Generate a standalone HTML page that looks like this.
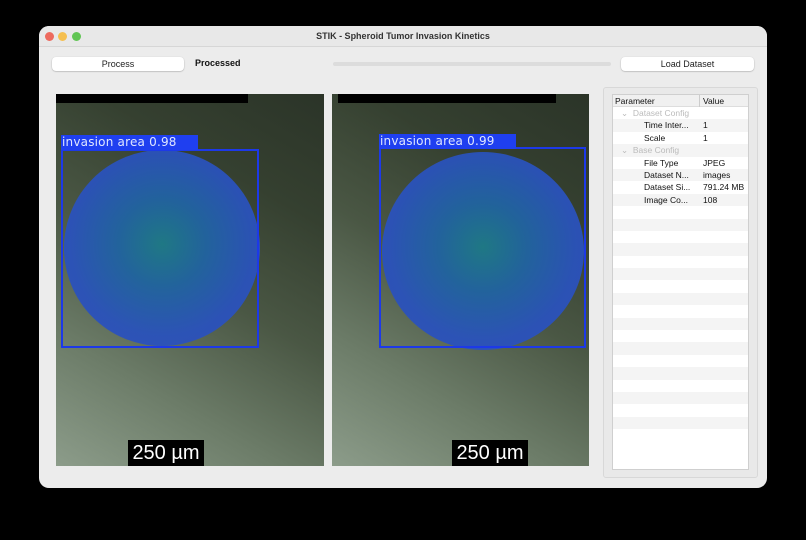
<!DOCTYPE html>
<html><head><meta charset="utf-8"><style>
*{margin:0;padding:0;box-sizing:border-box}
body{width:806px;height:540px;background:#000;position:relative;overflow:hidden;font-family:"Liberation Sans",sans-serif}
.win{position:absolute;left:39px;top:26px;width:728px;height:462px;background:#ececec;border-radius:10px;overflow:hidden}
.title{position:absolute;left:0;top:0;width:100%;height:21px;background:#e8e8e8;border-bottom:1px solid #d6d6d6;text-align:center;font-size:9px;font-weight:bold;color:#333;line-height:20px}
.dot{position:absolute;top:6px;width:9px;height:9px;border-radius:50%}
.btn{position:absolute;height:14px;background:#fff;border-radius:4px;box-shadow:0 0.5px 1.5px rgba(0,0,0,.3);font-size:9px;color:#222;text-align:center;line-height:14px}
.img{position:absolute;top:68px;height:372px;overflow:hidden;background:linear-gradient(30deg,#8c9c8a 0%,#6c7c68 25%,#4a5744 50%,#354030 75%,#2b3428 100%)}
.strip{position:absolute;top:0;height:9px;background:#000}
.lab{position:absolute;height:15px;background:#1f3ff0;color:#dfe6ff;font-size:12px;line-height:15px;padding-left:1px;font-family:"DejaVu Sans",sans-serif;letter-spacing:.2px}
.box{position:absolute;border:2px solid #1d39e8}
.sph{position:absolute;border-radius:50%;background:radial-gradient(circle at 50% 48%,#1d7a88 0%,#2064a0 30%,#2a52bb 65%,#2e4ec0 100%);opacity:.95}
.scale{position:absolute;top:346px;width:76px;height:26px;background:#000;color:#fff;font-size:20px;line-height:26px;text-align:center}
.tbl{position:absolute;left:573px;top:68px;width:137px;height:376px;background:#fff;border:1px solid #cfcfcf;font-size:8.5px;color:#111}
.row{height:12.4px;line-height:12.4px;position:relative;white-space:nowrap}
.row:nth-child(even){background:#f4f4f4}
.c1{position:absolute;left:31px}.c2{position:absolute;left:90px}
.g{color:#bbb}
</style></head><body>
<div class="win">
<div class="title">STIK - Spheroid Tumor Invasion Kinetics
<div class="dot" style="left:6px;background:#ed6a5e"></div>
<div class="dot" style="left:19px;background:#f5bf4f"></div>
<div class="dot" style="left:33px;background:#61c554"></div></div>
<div class="btn" style="left:13px;top:31px;width:132px">Process</div>
<div style="position:absolute;left:156px;top:32px;font-size:9px;font-weight:bold;color:#111">Processed</div>
<div style="position:absolute;left:294px;top:36px;width:278px;height:4px;background:#dcdcdc;border-radius:2px"></div>
<div class="btn" style="left:582px;top:31px;width:133px">Load Dataset</div>
<div style="position:absolute;left:564px;top:61px;width:155px;height:391px;border:1px solid #d8d8d8;border-radius:3px;background:#e9e9e9"></div>

<div class="img" style="left:17px;width:268px">
<div class="strip" style="left:0;width:192px"></div>
<div class="sph" style="left:8px;top:56px;width:196px;height:196px"></div>
<div class="box" style="left:5px;top:55px;width:198px;height:199px"></div>
<div class="lab" style="left:5px;top:41px;width:137px">invasion area 0.98</div>
<div class="scale" style="left:72px">250 µm</div>
</div>
<div class="img" style="left:293px;width:257px">
<div class="strip" style="left:6px;width:218px"></div>
<div class="sph" style="left:50px;top:58px;width:202px;height:198px"></div>
<div class="box" style="left:47px;top:53px;width:207px;height:201px"></div>
<div class="lab" style="left:47px;top:40px;width:137px">invasion area 0.99</div>
<div class="scale" style="left:120px">250 µm</div>
</div>

<div class="tbl">
<div class="row" style="background:#f0f0f0;border-bottom:1px solid #ddd;height:12px;line-height:12px"><span style="position:absolute;left:2px">Parameter</span><span style="position:absolute;left:86px;border-left:1px solid #ccc;padding-left:3px">Value</span></div>
<div>
<div class="row"><span class="g" style="position:absolute;left:8px">⌄&nbsp; Dataset Config</span></div>
<div class="row"><span class="c1">Time Inter...</span><span class="c2">1</span></div>
<div class="row"><span class="c1">Scale</span><span class="c2">1</span></div>
<div class="row"><span class="g" style="position:absolute;left:8px">⌄&nbsp; Base Config</span></div>
<div class="row"><span class="c1">File Type</span><span class="c2">JPEG</span></div>
<div class="row"><span class="c1">Dataset N...</span><span class="c2">images</span></div>
<div class="row"><span class="c1">Dataset Si...</span><span class="c2">791.24 MB</span></div>
<div class="row"><span class="c1">Image Co...</span><span class="c2">108</span></div>
<div class="row"></div><div class="row"></div><div class="row"></div><div class="row"></div><div class="row"></div><div class="row"></div><div class="row"></div><div class="row"></div><div class="row"></div><div class="row"></div><div class="row"></div><div class="row"></div><div class="row"></div><div class="row"></div><div class="row"></div><div class="row"></div><div class="row"></div><div class="row"></div><div class="row"></div>
</div></div>
</div>
</body></html>
